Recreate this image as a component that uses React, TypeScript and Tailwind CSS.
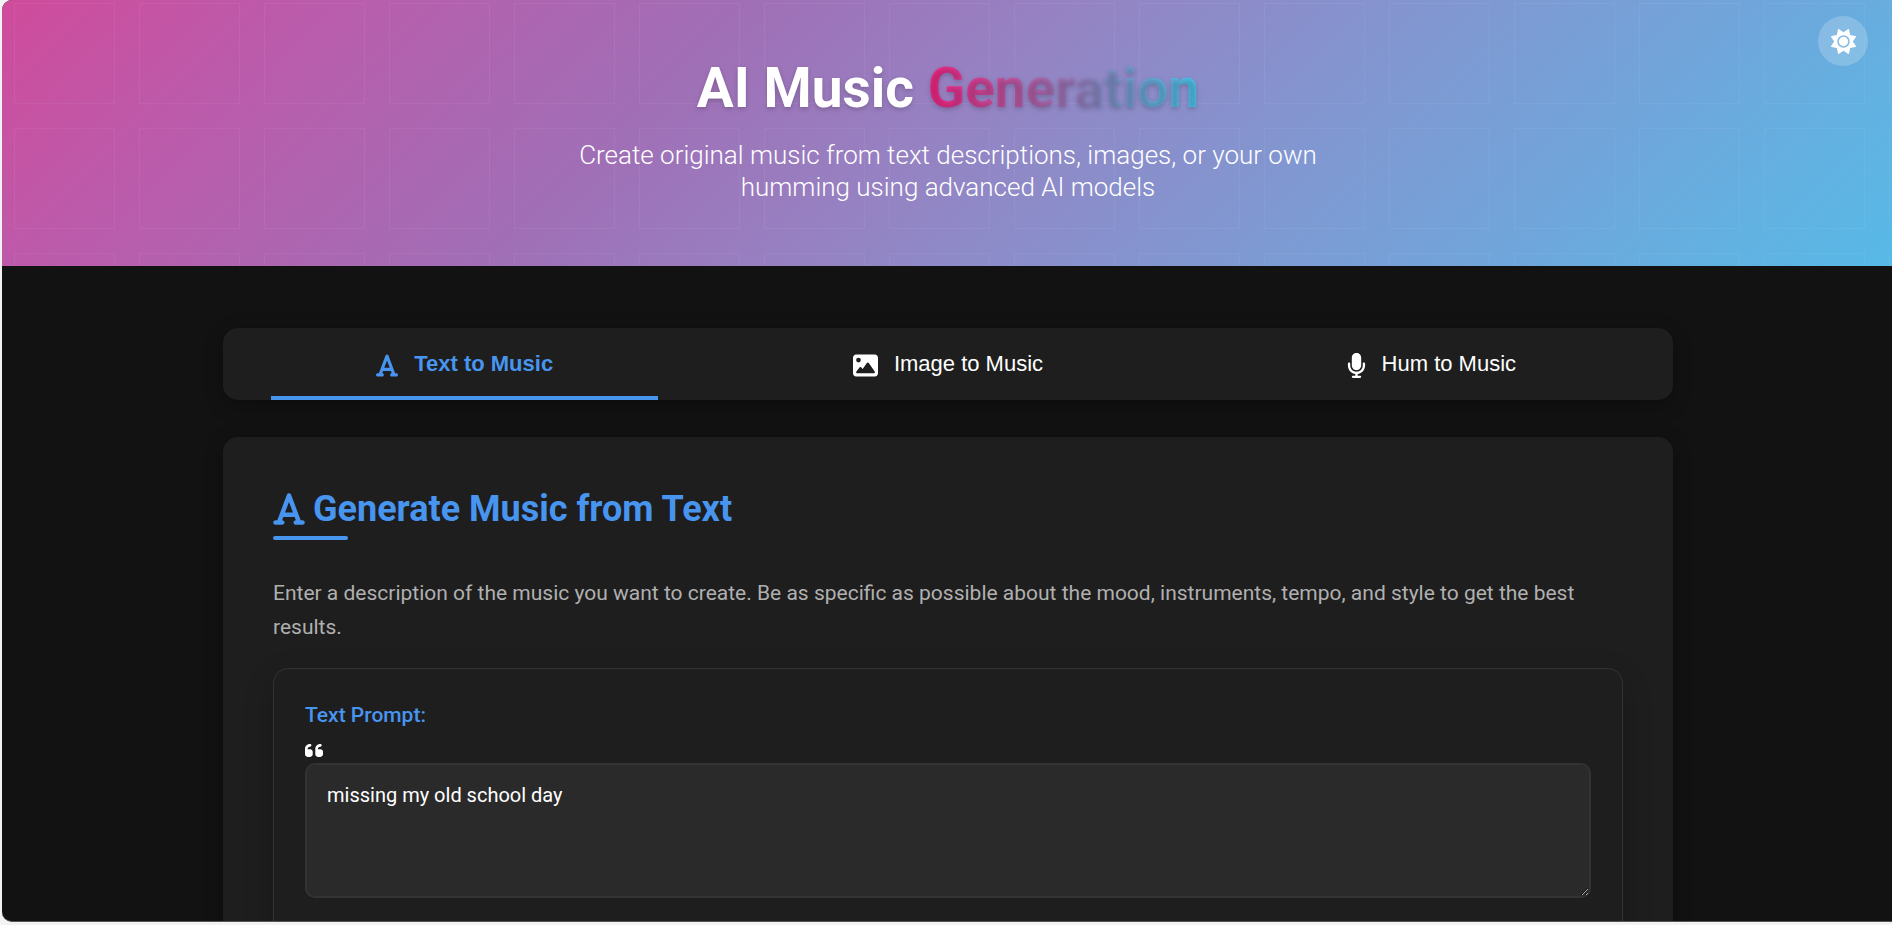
import { useState } from "react";
import { FaFont, FaImage, FaMicrophone, FaQuoteLeft, FaSun } from "react-icons/fa6";

const tabs = [
  { id: "text", label: "Text to Music", Icon: FaFont, iconClass: "mt-1 h-[25px] w-[22px]" },
  { id: "image", label: "Image to Music", Icon: FaImage, iconClass: "mt-1 h-[25px] w-[25px]" },
  { id: "hum", label: "Hum to Music", Icon: FaMicrophone, iconClass: "mt-1 h-[25px] w-[19px]" },
];

function Header() {
  return (
    <header className="relative flex flex-col items-center bg-[linear-gradient(135deg,#d04b9b_0%,#bd5aaa_13%,#a06fb6_35%,#9583c3_50%,#7e9ad3_70%,#6fa6db_82%,#64b0e0_90%,#57b9e7_100%)] px-6 pt-[53px] pb-[63px] text-white">
      <svg className="absolute inset-0 h-full w-full" aria-hidden="true">
        <defs>
          <pattern id="squares" width="125" height="125" patternUnits="userSpaceOnUse">
            <rect x="12.5" y="3.5" width="100" height="100" fill="none" stroke="#fff" strokeOpacity="0.05" />
          </pattern>
        </defs>
        <rect width="100%" height="100%" fill="url(#squares)" />
      </svg>
      <h1 className="relative text-[55px] leading-[70px] font-bold [text-shadow:0_2px_5px_rgba(0,0,0,0.2)]">
        AI Music{" "}
        <span className="bg-[linear-gradient(90deg,#f72585,#4cc9f0)] bg-clip-text text-transparent">Generation</span>
      </h1>
      <p className="relative mt-4 max-w-[750px] text-center text-[26px] leading-8 font-light text-white">
        Create original music from text descriptions, images, or your own humming using advanced AI models
      </p>
      <button
        type="button"
        aria-label="Toggle theme"
        className="absolute top-4 right-[26px] flex size-[50px] items-center justify-center rounded-full bg-white/20 text-[25px]"
      >
        <FaSun />
      </button>
    </header>
  );
}

function PromptCard() {
  const [prompt, setPrompt] = useState("missing my old school day");
  return (
    <div className="mt-6 rounded-[15px] border border-[#333] p-[31px] pb-20 shadow-[0_10px_30px_rgba(0,0,0,0.2)]">
      <label htmlFor="prompt" className="block text-[21px] leading-[30px] font-medium text-[#4895ef]">
        Text Prompt:
      </label>
      <FaQuoteLeft className="mt-[10px] mb-[2px] h-[21px] w-[18px] text-white" />
      <textarea
        id="prompt"
        value={prompt}
        onChange={(e) => setPrompt(e.target.value)}
        className="block h-[135px] w-full resize-y rounded-[10px] border-2 border-[#333] bg-[#2a2a2a] px-5 py-4 text-[20px] leading-7 text-white outline-none"
      />
    </div>
  );
}

export default function App() {
  const [active, setActive] = useState("text");
  return (
    <div className="h-screen overflow-hidden bg-[#f3f3f3] pb-[3px] pl-[2px] font-['Roboto',sans-serif]">
      <div className="-mr-[2px] h-full overflow-hidden rounded-l-[10px] border-b border-[#555] bg-[#121212]">
        <Header />
        <main className="mx-auto max-w-[1450px] pt-[62px]">
          <nav className="flex overflow-hidden rounded-[15px] bg-[#1e1e1e] shadow-[0_5px_19px_rgba(0,0,0,0.3)]">
            {tabs.map(({ id, label, Icon, iconClass }) => (
              <button
                key={id}
                type="button"
                onClick={() => setActive(id)}
                className={`relative flex h-[72px] flex-1 items-center justify-center gap-4 pb-0.5 font-['Liberation_Sans',sans-serif] text-[22px] ${
                  active === id ? "font-bold text-[#4895ef]" : "text-white"
                }`}
              >
                <Icon className={iconClass} />
                {label}
                {active === id && <span className="absolute bottom-0 left-[10%] h-1 w-4/5 bg-[#4895ef]" />}
              </button>
            ))}
          </nav>
          <section className="mt-[37px] rounded-[15px] bg-[#1e1e1e] p-[50px] shadow-[0_5px_19px_rgba(0,0,0,0.3)]">
            <h2 className="flex items-center gap-2 text-[36px] leading-[44px] font-bold text-[#4895ef]">
              <FaFont className="h-9 w-8" />
              Generate Music from Text
            </h2>
            <div className="mt-[5px] h-1 w-[75px] rounded-full bg-[#4895ef]" />
            <p className="mt-9 text-[21px] leading-[34px] text-[#b0b0b0]">
              Enter a description of the music you want to create. Be as specific as possible about the mood,
              instruments, tempo, and style to get the best results.
            </p>
            <PromptCard />
          </section>
        </main>
      </div>
    </div>
  );
}
